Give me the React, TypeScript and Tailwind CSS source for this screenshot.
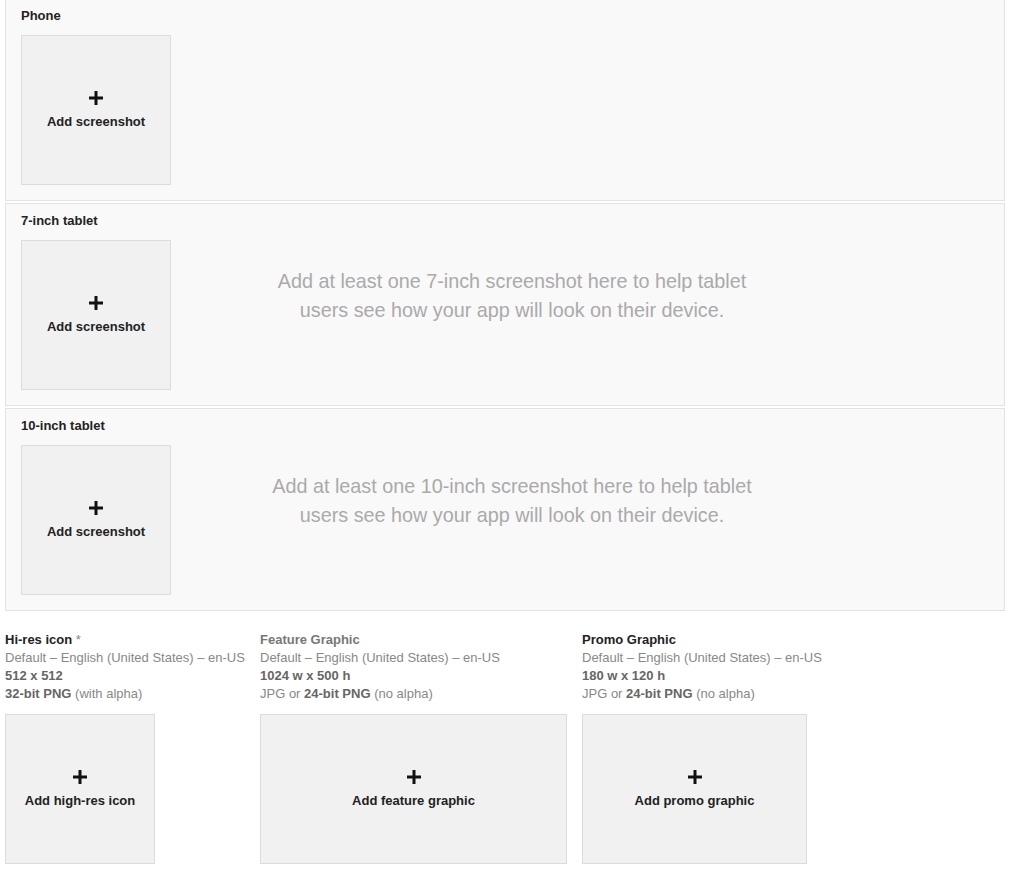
import React from "react";

const font = { fontFamily: '"Liberation Sans", Arial, sans-serif' };

function Plus() {
    return (
        <svg width="14" height="14" viewBox="0 0 14 14" className="block">
            <rect x="5.5" y="0" width="3" height="14" fill="#111" />
            <rect x="0" y="5.5" width="14" height="3" fill="#111" />
        </svg>
    );
}

function AddBox({ label, width }: { label: string; width: string }) {
    return (
        <div className={`${width} h-[150px] shrink-0 border border-[#dcdcdc] bg-[#f1f1f1] flex flex-col items-center justify-center`}>
            <Plus />
            <div className="mt-[9px] text-[13px] leading-[15px] font-bold text-[#222]">{label}</div>
        </div>
    );
}

type Device = { name: string; hint?: string };

const devices: Device[] = [
    { name: "Phone" },
    { name: "7-inch tablet", hint: "Add at least one 7-inch screenshot here to help tablet users see how your app will look on their device." },
    { name: "10-inch tablet", hint: "Add at least one 10-inch screenshot here to help tablet users see how your app will look on their device." },
];

type Asset = {
    title: string;
    required?: boolean;
    titleGray?: boolean;
    size: string;
    format: string;
    alpha: string;
    button: string;
    col: string;
    box: string;
};

const assets: Asset[] = [
    { title: "Hi-res icon", required: true, size: "512 x 512", format: "32-bit PNG", alpha: "(with alpha)", button: "Add high-res icon", col: "w-[240px]", box: "w-[150px]" },
    { title: "Feature Graphic", titleGray: true, size: "1024 w x 500 h", format: "24-bit PNG", alpha: "(no alpha)", button: "Add feature graphic", col: "w-[307px]", box: "w-[307px]" },
    { title: "Promo Graphic", size: "180 w x 120 h", format: "24-bit PNG", alpha: "(no alpha)", button: "Add promo graphic", col: "w-[250px]", box: "w-[225px]" },
];

export default function App() {
    return (
        <div className="min-h-[875px] bg-white pl-[5px] overflow-hidden" style={font}>
            {/* Screenshot sections */}
            <div className="-mt-[2px] w-[1000px]">
                {devices.map((d) => (
                    <div key={d.name} className="h-[203px] mb-[2px] border border-[#e2e2e2] bg-[#f9f9f9] px-[15px] pt-[9px]">
                        <div className="text-[13px] leading-[16px] font-bold text-[#222]">{d.name}</div>
                        <div className="mt-[11px] flex items-start">
                            <AddBox label="Add screenshot" width="w-[150px]" />
                            {d.hint && (
                                <div className="flex-1 pr-[136px] pt-[27px]">
                                    <p className="mx-auto max-w-[500px] text-center text-[19.8px] leading-[29px] text-[#aaaaaa]">{d.hint}</p>
                                </div>
                            )}
                        </div>
                    </div>
                ))}
            </div>

            {/* Graphic assets */}
            <div className="mt-[20px] flex items-start gap-[15px]">
                {assets.map((a) => (
                    <div key={a.title} className={a.col}>
                        <div className="text-[13px] leading-[18px] whitespace-nowrap">
                            <div className={`font-bold ${a.titleGray ? "text-[#777]" : "text-[#222]"}`}>
                                {a.title}
                                {a.required && <span className="font-normal text-[#888]"> *</span>}
                            </div>
                            <div className="text-[#888]">Default – English (United States) – en-US</div>
                            <div className="font-bold text-[#666]">{a.size}</div>
                            <div className="text-[#888]">
                                {a.title === "Hi-res icon" ? null : <span>JPG or </span>}
                                <span className="font-bold text-[#666]">{a.format}</span> {a.alpha}
                            </div>
                        </div>
                        <div className="mt-[11px]">
                            <AddBox label={a.button} width={a.box} />
                        </div>
                    </div>
                ))}
            </div>
        </div>
    );
}
